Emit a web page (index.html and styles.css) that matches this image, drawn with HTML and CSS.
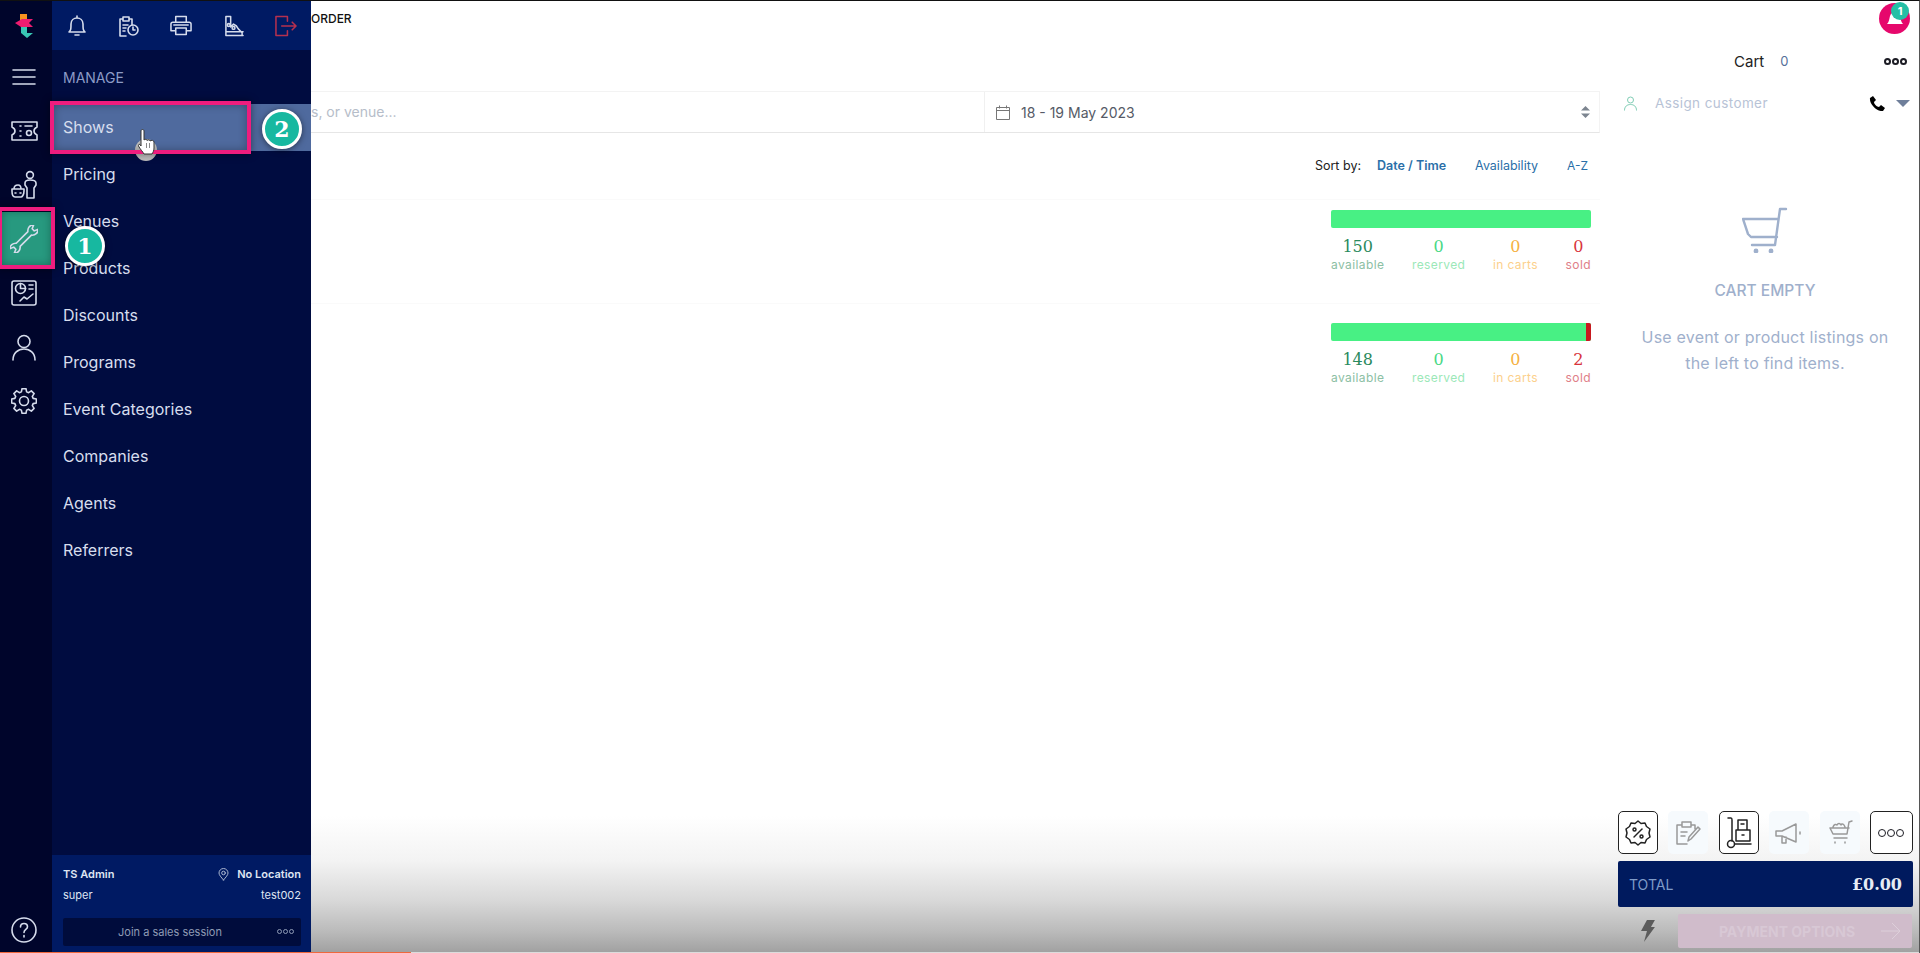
FILE: index.html
```html
<!DOCTYPE html>
<html lang="en">
<head>
    <meta charset="UTF-8">
    <title>Order</title>
    <link rel="stylesheet" href="styles.css">
</head>
<body>
<div class="app">

    <!-- icon rail -->
    <nav class="rail">
        <div class="logo">
            <svg width="24" height="26" viewBox="0 0 24 26">
                <polygon points="8,1 15,1 15,8 8,8" fill="#f7931e"/>
                <polygon points="3,10 10,6 21,6 17,10 21,14 9,14" fill="#ee1c70"/>
                <polygon points="9,14 15,14 15,20 21,20 15,25 9,20" fill="#39c6b4"/>
            </svg>
        </div>
        <div class="rail-item">
            <svg class="ico" width="24" height="18" viewBox="0 0 24 18"><path d="M1 2h22M1 9h22M1 16h22"/></svg>
        </div>
        <div class="rail-item">
            <svg class="ico" width="27" height="20" viewBox="0 0 27 20"><path d="M1 1h25v5c-2 1-3 2-3 4s1 3 3 4v5H1v-5c2-1 3-2 3-4S3 7 1 6z"/><path d="M9 5h1M9 10h1M9 15h1M14 5h7"/><circle cx="18" cy="12" r="2.500"/></svg>
        </div>
        <div class="rail-item">
            <svg class="ico" width="28" height="30" viewBox="0 0 28 30"><circle cx="20" cy="5" r="3.400"/><path d="M17 28V18l-2-3v-2c0-2 2-3 5-3s6 1 6 3v2l-2 3v10z"/><path d="M2 19h12v2c0 4-2 6-3 6H5c-2 0-3-2-3-6zM4 19c0-2 1-4 4-4s3 2 3 4M5 23h1M10 23h1"/></svg>
        </div>
        <div class="rail-item active">
            <svg class="ico" width="28" height="28" viewBox="0 0 28 28"><path transform="translate(14 14) rotate(-45)" d="M-8.500-2.500H8A6 6 0 0 1 17-3.200L13-1.500V1.500L17 3.200A6 6 0 0 1 8 2.500H-8A6 6 0 0 1-17 3.200L-13 1.500V-1.500L-17-3.200A6 6 0 0 1-8.500-2.500Z"/></svg>
        </div>
        <div class="rail-item">
            <svg class="ico" width="26" height="26" viewBox="0 0 26 26"><rect x="1" y="1" width="24" height="24" rx="2"/><circle cx="9.500" cy="8.500" r="5"/><path d="M9.500 3.500v5h5M18 5h4M18 9h4M9 21l4-4 3 2 6-5"/></svg>
        </div>
        <div class="rail-item">
            <svg class="ico" width="24" height="27" viewBox="0 0 24 27"><circle cx="12" cy="7.500" r="6"/><path d="M1 26c0-7 5-11 11-11s11 4 11 11"/></svg>
        </div>
        <div class="rail-item">
            <svg class="ico" width="26" height="26" viewBox="0 0 26 26"><polygon points="22.130,10.380 25.350,11.040 25.350,14.960 22.130,15.620 21.310,17.610 23.110,20.350 20.350,23.110 17.610,21.310 15.620,22.130 14.960,25.350 11.040,25.350 10.380,22.130 8.390,21.310 5.650,23.110 2.890,20.350 4.690,17.610 3.870,15.620 .65,14.960 .65,11.040 3.870,10.380 4.690,8.390 2.890,5.650 5.650,2.890 8.390,4.690 10.380,3.870 11.040,.65 14.960,.65 15.620,3.870 17.610,4.690 20.350,2.890 23.110,5.650 21.310,8.390"/><circle cx="13" cy="13" r="4.500"/></svg>
        </div>
        <div class="rail-help">
            <svg class="ico" width="26" height="26" viewBox="0 0 26 26"><circle cx="13" cy="13" r="12"/><path d="M9.500 10c0-2 1.500-3.500 3.500-3.500s3.500 1.500 3.500 3.300c0 2.700-3.500 2.700-3.500 5.700M13 18.500v1.500"/></svg>
        </div>
    </nav>

    <!-- flyout menu -->
    <aside class="panel">
        <div class="panel-top">
            <svg class="ico" width="18" height="22" viewBox="0 0 18 22"><path d="M1 17c2-2 2-3 2-8 0-4 3-6 6-6s6 2 6 6c0 5 0 6 2 8zM9 1v2M7 20h4"/></svg>
            <svg class="ico" width="21" height="22" viewBox="0 0 21 22"><path d="M12 4h2v6M8 21H2V4h3M5 2h6v4H5zM5 10h5M5 13h3M5 16h2"/><circle cx="15" cy="15" r="5"/><path d="M15 12v3h2"/></svg>
            <svg class="ico" width="22" height="21" viewBox="0 0 23 21"><path d="M6 7V1h11v6M6 16H1V9c0-1 1-2 2-2h17c1 0 2 1 2 2v7h-5M6 13h11v7H6zM4 10h15"/></svg>
            <svg class="ico" width="20" height="22" viewBox="0 0 21 22"><path d="M2 1h5v11l3-3 3 2 2 3 4 4v3H2zM2 17h18M2 21h18"/><circle cx="5" cy="10" r="1.500"/><circle cx="10" cy="13" r="1.500"/></svg>
            <svg class="ico logout" width="22" height="22" viewBox="0 0 23 22"><path d="M13 6V1H1v20h12v-5M7 11h15M18 7l4 4-4 4"/></svg>
        </div>
        <div class="menu">
            <div class="menu-title">MANAGE</div>
            <a class="menu-item current">Shows</a>
            <a class="menu-item">Pricing</a>
            <a class="menu-item">Venues</a>
            <a class="menu-item">Products</a>
            <a class="menu-item">Discounts</a>
            <a class="menu-item">Programs</a>
            <a class="menu-item">Event Categories</a>
            <a class="menu-item">Companies</a>
            <a class="menu-item">Agents</a>
            <a class="menu-item">Referrers</a>
        </div>
        <div class="user">
            <div class="user-row strong">
                <span>TS Admin</span>
                <span class="loc">
                    <svg class="ico loc-ico" width="11" height="13" viewBox="0 0 11 13"><path d="M5.500 12C3 9 1 7 1 5a4.500 4.500 0 0 1 9 0c0 2-2 4-4.500 7z"/><circle cx="5.500" cy="5" r="1.800"/></svg>
                    No Location
                </span>
            </div>
            <div class="user-row">
                <span>super</span>
                <span>test002</span>
            </div>
            <div class="session">
                <span>Join a sales session</span>
                <span class="dots dots-small"><i></i><i></i><i></i></span>
            </div>
        </div>
    </aside>

    <!-- order listing -->
    <main class="content">
        <div class="page-title">ORDER</div>
        <div class="search">
            <div class="search-text">s, or venue...</div>
            <div class="search-date">
                <svg class="cal" width="14" height="15" viewBox="0 0 14 15"><path d="M.5 2.500h13v12H.5zM.5 5.500h13M3.500.5v3M10.500.5v3"/></svg>
                <span>18 - 19 May 2023</span>
                <svg class="updown" width="9" height="12" viewBox="0 0 9 12"><path d="M4.500 0L9 4.500H0zM4.500 12L0 7.500h9z"/></svg>
            </div>
        </div>
        <div class="sort">
            <span class="sort-label">Sort by:</span>
            <a class="sort-link bold">Date / Time</a>
            <a class="sort-link">Availability</a>
            <a class="sort-link sort-az">A-Z</a>
        </div>
        <div class="show-row">
            <div class="avail">
                <div class="bar"><div class="bar-sold" style="width:0"></div></div>
                <div class="stats">
                    <div class="stat available"><b>150</b><span>available</span></div>
                    <div class="stat reserved"><b>0</b><span>reserved</span></div>
                    <div class="stat incarts"><b>0</b><span>in carts</span></div>
                    <div class="stat sold"><b>0</b><span>sold</span></div>
                </div>
            </div>
        </div>
        <div class="show-row second">
            <div class="avail">
                <div class="bar"><div class="bar-sold" style="width:5px"></div></div>
                <div class="stats">
                    <div class="stat available"><b>148</b><span>available</span></div>
                    <div class="stat reserved"><b>0</b><span>reserved</span></div>
                    <div class="stat incarts"><b>0</b><span>in carts</span></div>
                    <div class="stat sold"><b>2</b><span>sold</span></div>
                </div>
            </div>
        </div>
    </main>

    <!-- cart column -->
    <section class="cart">
        <div class="cart-head">
            <span class="cart-title">Cart</span>
            <span class="cart-count">0</span>
            <span class="dots dots-head"><i></i><i></i><i></i></span>
        </div>
        <div class="customer">
            <svg class="cust-ico" width="13" height="15" viewBox="0 0 13 15"><circle cx="6.500" cy="4" r="3"/><path d="M.5 14.500c0-4 2.500-6 6-6s6 2 6 6"/></svg>
            <span class="cust-text">Assign customer</span>
            <svg width="16" height="15" viewBox="0 0 16 15"><path d="M1 2l3-2 3 4-2 2c0 2 3 5 5 5l2-2 4 3-2 3c-6 1-14-7-13-13z" fill="#000"/></svg>
            <span class="caret"></span>
        </div>
        <div class="empty">
            <svg width="46" height="46" viewBox="0 0 46 46" class="empty-ico"><path d="M44 2h-6l-5 36H10M1 12h35M1 12l5 15 3 3h26"/><circle cx="14" cy="44" r="1.200"/><circle cx="29" cy="44" r="1.200"/></svg>
            <h3>CART EMPTY</h3>
            <p>Use event or product listings on<br>the left to find items.</p>
        </div>
        <div class="tools">
            <div class="tool on">
                <svg class="tool-ico" width="26" height="26" viewBox="0 0 26 26"><path d="M13 1l3 2.500 4-.5 1.500 3.500L25 9l-1 4 1 4-3.500 2.500L20 23l-4-.5L13 25l-3-2.500-4 .5-1.500-3.500L1 17l1-4-1-4 3.500-2.500L6 3l4 .5z"/><path d="M9 17l8-8"/><circle cx="9.500" cy="9.500" r="1.500"/><circle cx="16.500" cy="16.500" r="1.500"/></svg>
            </div>
            <div class="tool">
                <svg class="tool-ico" width="26" height="26" viewBox="0 0 26 26"><path d="M17 5h3v4M12 24H2V5h4M7 2h9v5H7zM6 12h6M6 16h4M13 21l1-4 9-10 2 2-9 10z"/></svg>
            </div>
            <div class="tool on">
                <svg class="tool-ico" width="26" height="32" viewBox="0 0 26 32"><path d="M2 1h3c1 0 1 1 1 2v21M9 27h16M12 3h9v10h-9zM10 13h14v11H10z"/><circle cx="5" cy="27" r="3.500"/><path d="M15 7h3M16 18h2"/></svg>
            </div>
            <div class="tool">
                <svg class="tool-ico" width="28" height="24" viewBox="0 0 28 24"><path d="M1 10h6l14-7v18L7 15H1zM7 15v7h4v-6M25 11v2"/></svg>
            </div>
            <div class="tool">
                <svg class="tool-ico" width="26" height="26" viewBox="0 0 26 26"><path d="M25 1l-3 1-2 12H6L3 8h19M7 18h13M8 22v1M18 22v1M6 7c1-3 3-3 4-2 1-2 3-2 4 0 1-2 3-1 4 2"/></svg>
            </div>
            <div class="tool on wide">
                <span class="dots dots-tool"><i></i><i></i><i></i></span>
            </div>
        </div>
        <div class="total">
            <span class="total-label">TOTAL</span>
            <span class="total-val">£0.00</span>
        </div>
        <div class="pay-row">
            <svg class="bolt" width="14" height="22" viewBox="0 0 14 22"><path d="M6 0h8L10 7h4L3 22l3-11H0z"/></svg>
            <div class="pay">
                <span>PAYMENT OPTIONS</span>
                <svg width="20" height="18" viewBox="0 0 20 18"><path d="M0 9h19M11 1l8 8-8 8"/></svg>
            </div>
        </div>
    </section>

    <!-- tutorial marks laid over the screenshot -->
    <div class="click-dot"></div>
    <div class="mark mark-rail"></div>
    <div class="mark mark-shows"></div>
    <div class="badge badge-1">1</div>
    <div class="badge badge-2">2</div>
    <svg class="hand" width="20" height="26" viewBox="0 0 20 26"><path d="M3 2c0-2 3-2 3 0v9c1-1 3-1 3 .5 1-1 3-1 3 .5 1-1 4-1 4 1V19c0 3-1 4-2 6H6c-1-2-4-5-5.500-8-.5-1 .5-2 1.500-1.500L3 17z" fill="#fff" stroke="#333" stroke-width="1"/><path d="M8.500 14v5M11.500 14v5" stroke="#555" stroke-width=".7"/></svg>
    <div class="notif">
        <svg width="18" height="18" viewBox="0 0 18 18"><path d="M1 14c2-2 2-4 3-8 1-3 3-4 5-4s4 1 5 4c1 4 1 6 3 8z" fill="#fff"/></svg>
        <span class="notif-count">1</span>
    </div>
    <div class="progress"></div>
</div>
</body>
</html>
```

FILE: styles.css
```css
* {
    box-sizing: border-box;
}
body {
    margin: 0;
    font-family: Inter, "Liberation Sans", sans-serif;
    color: #222;
    background: #fff;
}
.app {
    position: relative;
    display: flex;
    height: 953px;
    overflow: hidden;
    border-top: 1px solid #111;
    border-right: 1px solid #555;
    background: linear-gradient(to bottom, #fff 0, #fff 815px, #f3f3f3 860px, #d8d8d8 900px, #bbb 930px, #a0a0a0 952px);
}
.ico {
    fill: none;
    stroke: #d5dcec;
    stroke-width: 1.6;
    stroke-linejoin: round;
    stroke-linecap: round;
}

/* rail */
.rail {
    width: 52px;
    flex: none;
    display: flex;
    flex-direction: column;
    background: #00052b;
}
.logo {
    height: 49px;
    padding-right: 4px;
    display: flex;
    align-items: center;
    justify-content: center;
}
.rail-item {
    height: 54px;
    padding-right: 4px;
    display: flex;
    align-items: center;
    justify-content: center;
}
.rail-item.active {
    background: #27997f;
}
.rail-help {
    margin-top: auto;
    height: 36px;
    padding-right: 4px;
    display: flex;
    align-items: flex-start;
    justify-content: center;
}

/* flyout */
.panel {
    width: 259px;
    flex: none;
    display: flex;
    flex-direction: column;
    background: #000c40;
}
.panel-top {
    height: 49px;
    flex: none;
    display: flex;
    align-items: center;
    justify-content: space-between;
    padding: 0 14px 0 16px;
    background: #001a63;
}
.logout {
    stroke: #b5304f;
}
.menu {
    flex: 1;
}
.menu-title {
    height: 54px;
    line-height: 55px;
    padding-left: 11px;
    font-size: 14px;
    color: #8c9bc6;
}
.menu-item {
    display: block;
    height: 47px;
    line-height: 46px;
    padding-left: 11px;
    font-size: 16px;
    color: #d7deee;
}
.menu-item.current {
    background: #4f6a9e;
}
.user {
    height: 98px;
    flex: none;
    padding: 9px 10px 0 11px;
    background: #001a63;
    font-size: 11px;
    color: #dfe5f2;
}
.user-row {
    display: flex;
    justify-content: space-between;
    height: 21px;
    line-height: 21px;
}
.user-row.strong {
    font-weight: 600;
}
.loc {
    display: flex;
    align-items: center;
    gap: 8px;
}
.loc-ico {
    stroke: #aab6d0;
    stroke-width: 1;
}
.session {
    position: relative;
    height: 28px;
    margin-top: 12px;
    padding-right: 24px;
    line-height: 28px;
    text-align: center;
    background: #000c3c;
    color: #8f9bb5;
    border-radius: 2px;
}
.session .dots {
    position: absolute;
    right: 7px;
    top: 11px;
}

.dots {
    display: inline-flex;
    gap: 1px;
}
.dots i {
    display: block;
    border-radius: 50%;
    border: 2px solid #1c1c24;
    width: 7px;
    height: 7px;
}
.dots-tool i {
    width: 8px;
    height: 8px;
    border-width: 1.500px;
}
.dots-small i {
    width: 5px;
    height: 5px;
    border: 1px solid #8f9bb5;
}

/* listing */
.content {
    flex: 1;
    min-width: 0;
    display: flex;
    flex-direction: column;
}
.page-title {
    height: 90px;
    padding-top: 10px;
    font-size: 12px;
    font-weight: 500;
    color: #111;
}
.search {
    height: 42px;
    flex: none;
    display: flex;
    border: 1px solid #f3f3f3;
    border-left: none;
    border-bottom: 1px solid #e6e6e6;
}
.search-text {
    width: 673px;
    line-height: 40px;
    font-size: 14px;
    color: #b6bdc9;
}
.search-date {
    flex: 1;
    display: flex;
    align-items: center;
    padding: 0 9px 0 11px;
    border-left: 1px solid #f0f0f0;
    font-size: 14px;
    color: #555a66;
}
.cal {
    fill: none;
    stroke: #777;
    margin-right: 11px;
}
.updown {
    margin-left: auto;
    fill: #7d8590;
}
.sort {
    height: 67px;
    flex: none;
    display: flex;
    justify-content: flex-end;
    gap: 29px;
    padding: 25px 12px 0 0;
    font-size: 12.500px;
    border-bottom: 1px solid #fafafa;
}
.sort-label {
    color: #222;
    margin-right: -13px;
}
.sort-link {
    color: #2a6fa8;
}
.sort-link.bold {
    font-weight: 600;
}
.sort-az {
    font-size: 12px;
    line-height: 15px;
}
.show-row {
    height: 104px;
    flex: none;
    padding: 10px 9px 0 0;
    display: flex;
    justify-content: flex-end;
    border-bottom: 1px solid #fafafa;
}
.show-row.second {
    padding-top: 19px;
    border-bottom: none;
}
.avail {
    width: 260px;
}
.bar {
    height: 18px;
    display: flex;
    justify-content: flex-end;
    background: #48f084;
    border-radius: 2px;
    overflow: hidden;
}
.bar-sold {
    background: #c8191f;
}
.stats {
    display: flex;
    justify-content: space-between;
    margin-top: 10px;
}
.stat {
    display: flex;
    flex-direction: column;
    align-items: center;
}
.stat b {
    font-family: "DejaVu Serif", serif;
    font-size: 16px;
    font-weight: 500;
    line-height: 18px;
}
.stat span {
    font-size: 12px;
    line-height: 18px;
    letter-spacing: .4px;
}
.available b { color: #2b8a5e; }
.available span { color: #8cc0a4; }
.reserved b { color: #48d884; }
.reserved span { color: #9be8b8; }
.incarts b { color: #f5b041; }
.incarts span { color: #fcd08c; }
.sold b { color: #d8343c; }
.sold span { color: #e08088; }

/* cart */
.cart {
    width: 319px;
    flex: none;
    display: flex;
    flex-direction: column;
}
.cart-head {
    height: 86px;
    flex: none;
    display: flex;
    align-items: center;
    padding: 34px 12px 0 134px;
}
.cart-title {
    font-size: 15px;
    color: #222;
}
.cart-count {
    margin-left: 16px;
    font-size: 13px;
    color: #55709a;
}
.dots-head {
    margin-left: auto;
}
.customer {
    height: 32px;
    flex: none;
    display: flex;
    align-items: center;
    padding: 0 9px 0 24px;
}
.cust-ico {
    fill: none;
    stroke: #7fcdb4;
}
.cust-text {
    flex: 1;
    margin-left: 18px;
    font-size: 13.500px;
    letter-spacing: .4px;
    color: #b8c3d6;
}
.caret {
    margin-left: 11px;
    border-left: 7px solid transparent;
    border-right: 7px solid transparent;
    border-top: 7px solid #6f7f9a;
}
.empty {
    flex: 1;
    display: flex;
    flex-direction: column;
    align-items: center;
    padding-top: 88px;
    padding-left: 11px;
    color: #9fb0cc;
}
.empty-ico {
    fill: none;
    stroke: #9fb0cc;
    stroke-width: 2.400;
    stroke-linecap: round;
    stroke-linejoin: round;
}
.empty h3 {
    margin: 28px 0 0;
    font-size: 15.500px;
    font-weight: 500;
    line-height: 20px;
}
.empty p {
    margin: 23px 0 0;
    font-size: 16px;
    letter-spacing: .2px;
    line-height: 26px;
    text-align: center;
}
.tools {
    display: flex;
    justify-content: space-between;
    padding: 0 6px 0 18px;
    height: 43px;
    flex: none;
}
.tool {
    width: 40px;
    height: 43px;
    display: flex;
    align-items: center;
    justify-content: center;
    background: #f6fafd;
    border-radius: 5px;
}
.tool.on {
    background: #fff;
    border: 1.500px solid #222;
}
.tool.wide {
    width: 43px;
}
.tool-ico {
    fill: none;
    stroke: #222;
    stroke-width: 1.500;
    stroke-linecap: round;
    stroke-linejoin: round;
}
.tool:not(.on) .tool-ico {
    stroke: #999;
}
.total {
    height: 46px;
    flex: none;
    margin: 7px 6px 0 18px;
    padding: 0 11px;
    display: flex;
    align-items: center;
    justify-content: space-between;
    background: #001a5e;
    border-radius: 2px;
}
.total-label {
    font-size: 14px;
    color: #7f9bc8;
}
.total-val {
    font-family: "DejaVu Serif", serif;
    font-size: 16px;
    font-weight: 600;
    color: #e7ecf5;
}
.pay-row {
    height: 46px;
    flex: none;
    display: flex;
    align-items: center;
    padding: 2px 7px 0 41px;
}
.bolt {
    fill: #5c5c5c;
}
.pay {
    width: 235px;
    height: 34px;
    margin-left: 23px;
    display: flex;
    align-items: center;
    justify-content: space-between;
    padding: 0 11px 0 41px;
    background: #d0bccb;
    border-radius: 2px;
    font-size: 14px;
    font-weight: 700;
    color: #d8c8d5;
}
.pay svg {
    fill: none;
    stroke: #ddcfda;
    stroke-width: 1;
}

/* overlays */
.mark {
    position: absolute;
    border: 4px solid #ee1d7e;
    box-shadow: 0 0 8px rgba(0, 0, 0, .45), inset 0 0 8px rgba(0, 0, 0, .3);
}
.mark-rail {
    left: -2px;
    top: 206px;
    width: 57px;
    height: 62px;
}
.mark-shows {
    left: 50px;
    top: 100px;
    width: 201px;
    height: 53px;
}
.badge {
    position: absolute;
    width: 40px;
    height: 40px;
    line-height: 34px;
    text-align: center;
    border-radius: 50%;
    border: 3px solid #fff;
    background: #17b8a0;
    color: #fff;
    font-family: "DejaVu Serif", serif;
    font-size: 22px;
    font-weight: 700;
    box-shadow: 0 1px 6px rgba(0, 0, 0, .5);
}
.badge-1 {
    left: 65px;
    top: 225px;
}
.badge-2 {
    left: 262px;
    top: 108px;
}
.click-dot {
    position: absolute;
    left: 135px;
    top: 138px;
    width: 22px;
    height: 22px;
    border-radius: 50%;
    background: #bdbdbd;
}
.hand {
    position: absolute;
    left: 138px;
    top: 128px;
}
.notif {
    position: absolute;
    left: 1879px;
    top: 2px;
    width: 31px;
    height: 31px;
    display: flex;
    align-items: center;
    justify-content: center;
    border-radius: 50%;
    background: #e6086c;
}
.notif-count {
    position: absolute;
    left: 12px;
    top: -1px;
    width: 18px;
    height: 18px;
    line-height: 18px;
    text-align: center;
    border-radius: 50%;
    background: #25bfa5;
    color: #fff;
    font-size: 11px;
    font-weight: 700;
}
/* video progress line along the bottom edge */
.progress {
    position: absolute;
    left: 0;
    right: 0;
    bottom: 0;
    height: 1px;
    background: linear-gradient(to right, #f0683c 411px, #dcdcdc 411px);
}
```
